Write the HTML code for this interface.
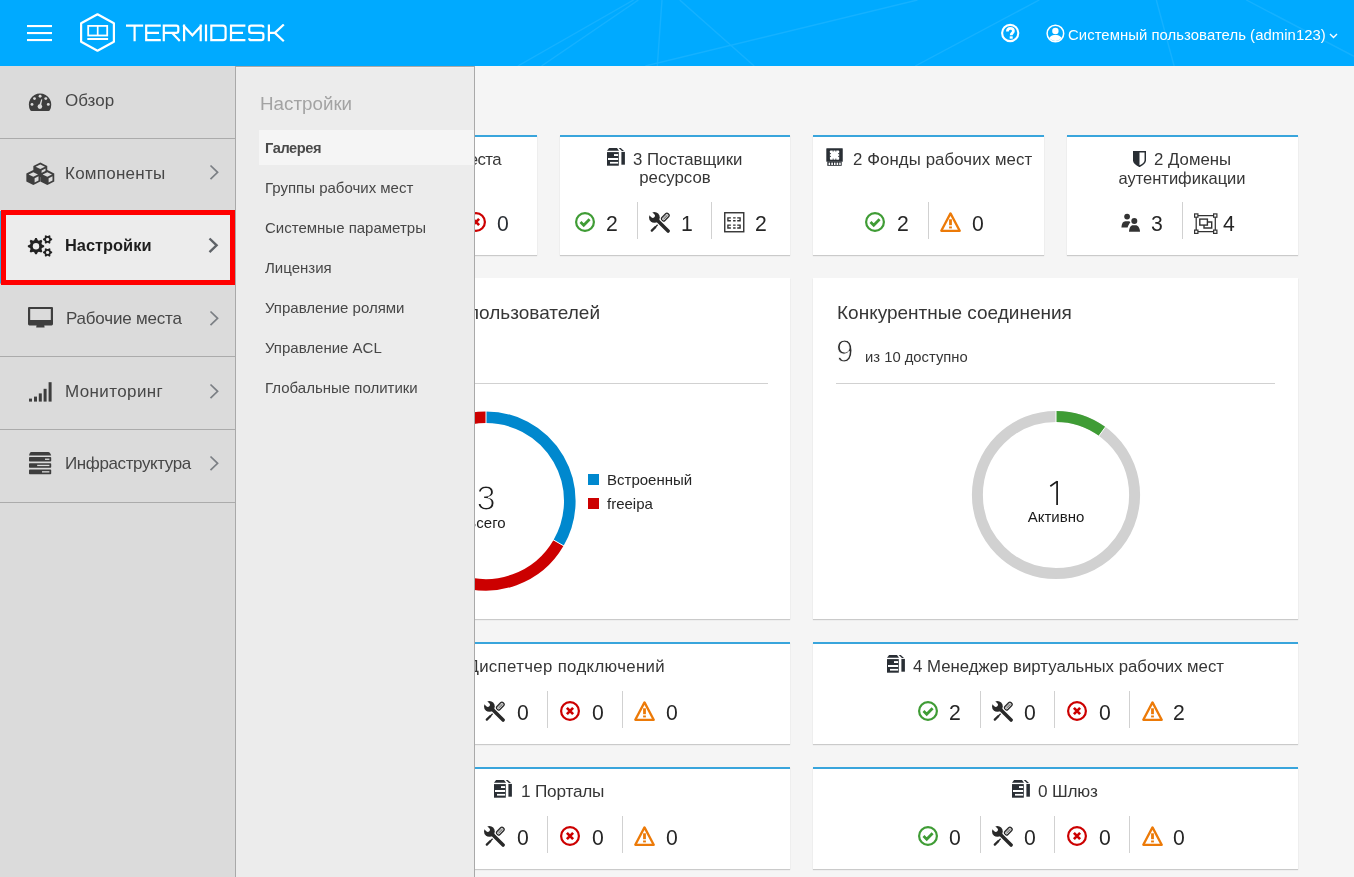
<!DOCTYPE html><html><head><meta charset="utf-8"><style>
html,body{margin:0;padding:0}
body{width:1354px;height:877px;overflow:hidden;position:relative;background:#f5f5f5;font-family:"Liberation Sans",sans-serif}
.t{position:absolute;white-space:nowrap;will-change:transform}
.card{position:absolute;background:#fff;box-shadow:0 1px 1px rgba(3,3,3,0.175)}
.acc{border-top:2px solid #39a5dc}
</style></head><body>
<div class="card acc" style="left:307px;top:135px;width:230px;height:118px"></div>
<div class="card acc" style="left:560px;top:135px;width:230px;height:118px"></div>
<div class="card acc" style="left:813px;top:135px;width:231px;height:118px"></div>
<div class="card acc" style="left:1067px;top:135px;width:231px;height:118px"></div>
<div class="card" style="left:307px;top:278px;width:483px;height:341px"></div>
<div class="card" style="left:813px;top:278px;width:485px;height:341px"></div>
<div class="card acc" style="left:307px;top:642px;width:483px;height:100px"></div>
<div class="card acc" style="left:813px;top:642px;width:485px;height:100px"></div>
<div class="card acc" style="left:307px;top:767px;width:483px;height:100px"></div>
<div class="card acc" style="left:813px;top:767px;width:485px;height:100px"></div>
<div class="t" style="left:-98.89999999999998px;width:600px;text-align:right;top:151.78px;font-size:16.8px;line-height:16.8px;color:#363636;font-weight:400;letter-spacing:-0.6px">еста</div>
<svg style="position:absolute;left:466px;top:212px" width="20" height="20" viewBox="0 0 20 20"><circle cx="10" cy="10" r="8.9" fill="none" stroke="#cc0000" stroke-width="2.2"/><path d="M6.9 6.9 L13.1 13.1 M13.1 6.9 L6.9 13.1" fill="none" stroke="#cc0000" stroke-width="2.7"/></svg>
<div class="t" style="left:497px;top:213.25px;font-size:21.2px;line-height:21.2px;color:#292e34;font-weight:400;">0</div>
<svg style="position:absolute;left:606px;top:148px" width="19" height="18" viewBox="0 0 19 18"><path d="M3.1 0 H11 L13 2.7 H1 Z" fill="#292e34"/><path d="M12.7 0 L14.7 0 L18 2.9 L15.9 2.9 Z" fill="#292e34"/><rect x="1" y="4.1" width="11.8" height="13.6" fill="#292e34"/><rect x="15.4" y="3.9" width="3.5" height="12.8" fill="#292e34"/><rect x="8" y="6.1" width="4.1" height="1.9" fill="#fff"/><rect x="2" y="10" width="10.1" height="2" fill="#fff"/><rect x="4" y="13.9" width="8.1" height="1.7" fill="#fff"/></svg>
<div class="t" style="left:632.6px;top:151.78px;font-size:16.8px;line-height:16.8px;color:#363636;font-weight:400;">3 Поставщики</div>
<div class="t" style="left:475.4px;width:400px;text-align:center;top:169.98px;font-size:16.8px;line-height:16.8px;color:#363636;font-weight:400;">ресурсов</div>
<svg style="position:absolute;left:574.5px;top:212px" width="20" height="20" viewBox="0 0 20 20"><circle cx="10" cy="10" r="8.9" fill="none" stroke="#3f9c35" stroke-width="2.2"/><path d="M5.5 10.1 L8.7 13.2 L14.6 7.3" fill="none" stroke="#3f9c35" stroke-width="2.8"/></svg>
<div class="t" style="left:606px;top:213.25px;font-size:21.2px;line-height:21.2px;color:#262626;font-weight:400;">2</div>
<div style="position:absolute;left:637px;top:202px;width:1px;height:37px;background:#d1d1d1"></div>
<svg style="position:absolute;left:648.6px;top:212px" width="21" height="21" viewBox="0 0 21 21"><g transform="rotate(-45 16.2 5.2)"><rect x="11.9" y="3.1" width="8.8" height="4.2" rx="1.8" fill="#fff" stroke="#292929" stroke-width="1.3"/><path d="M13.4 4.6 H19.4 M13.4 5.8 H19.4" stroke="#292929" stroke-width="0.7"/></g><path d="M12.6 8.8 L5.4 16" stroke="#292929" stroke-width="1.3"/><path d="M6.2 15.2 L2.8 18.6" stroke="#292929" stroke-width="2.3" stroke-linecap="round"/><path d="M7 7 L19.1 19.1" stroke="#fff" stroke-width="5.8" stroke-linecap="round"/><path d="M7 7 L19.1 19.1" stroke="#292929" stroke-width="3.5" stroke-linecap="round"/><circle cx="5.4" cy="5.4" r="5.35" fill="#292929"/><path d="M3.8 3.8 L-1 -1" stroke="#fff" stroke-width="4.2" stroke-linecap="round"/></svg>
<div class="t" style="left:681px;top:213.25px;font-size:21.2px;line-height:21.2px;color:#262626;font-weight:400;">1</div>
<div style="position:absolute;left:711px;top:202px;width:1px;height:37px;background:#d1d1d1"></div>
<svg style="position:absolute;left:724px;top:212px" width="21" height="21" viewBox="0 0 21 21"><rect x="0.75" y="0.75" width="19" height="19" fill="none" stroke="#333" stroke-width="1.4"/><path d="M6.9 5.9 H3.9 V8.75 H6.9 M13.2 5.9 H16.1 V8.75 H13.2 M9.1 5.9 H11.6 M9.1 8.75 H11.6 M6.9 13.1 H3.9 V15.95 H6.9 M13.2 13.1 H16.1 V15.95 H13.2 M9.1 13.1 H11.6 M9.1 15.95 H11.6" fill="none" stroke="#333" stroke-width="1.35"/></svg>
<div class="t" style="left:755px;top:213.25px;font-size:21.2px;line-height:21.2px;color:#262626;font-weight:400;">2</div>
<svg style="position:absolute;left:826px;top:148px" width="17" height="18" viewBox="0 0 17 18"><rect x="0.3" y="0.15" width="16.45" height="13.65" rx="0.5" fill="#292e34"/><rect x="1.3" y="13.6" width="14.4" height="4.2" fill="#292e34"/><g fill="#fff"><rect x="2.6" y="14.6" width="1.5" height="2.4"/><rect x="5.3" y="14.6" width="1.6" height="2.4"/><rect x="8" y="14.6" width="1.5" height="2.4"/><rect x="10.6" y="14.6" width="1.6" height="2.4"/><rect x="13.2" y="14.6" width="1.5" height="2.4"/></g><rect x="3.9" y="2.4" width="9.3" height="9.3" rx="0.8" fill="#fff"/><g fill="#292e34"><rect x="6.7" y="2.2" width="0.9" height="1.3"/><rect x="9.4" y="2.2" width="0.9" height="1.3"/><rect x="6.7" y="10.6" width="0.9" height="1.3"/><rect x="9.4" y="10.6" width="0.9" height="1.3"/><rect x="3.7" y="5.2" width="1.3" height="0.9"/><rect x="3.7" y="7.9" width="1.3" height="0.9"/><rect x="12.1" y="5.2" width="1.3" height="0.9"/><rect x="12.1" y="7.9" width="1.3" height="0.9"/></g></svg>
<div class="t" style="left:853.4px;top:151.98px;font-size:16.8px;line-height:16.8px;color:#363636;font-weight:400;letter-spacing:0.1px">2 Фонды рабочих мест</div>
<svg style="position:absolute;left:865px;top:212px" width="20" height="20" viewBox="0 0 20 20"><circle cx="10" cy="10" r="8.9" fill="none" stroke="#3f9c35" stroke-width="2.2"/><path d="M5.5 10.1 L8.7 13.2 L14.6 7.3" fill="none" stroke="#3f9c35" stroke-width="2.8"/></svg>
<div class="t" style="left:896.6px;top:213.25px;font-size:21.2px;line-height:21.2px;color:#262626;font-weight:400;">2</div>
<div style="position:absolute;left:928px;top:202px;width:1px;height:37px;background:#d1d1d1"></div>
<svg style="position:absolute;left:940px;top:212px" width="21" height="20" viewBox="0 0 21 20"><path d="M10.5 1.4 L19.7 18.8 L1.3 18.8 Z" fill="none" stroke="#ec7a08" stroke-width="2.3" stroke-linejoin="round"/><rect x="9.1" y="7.3" width="2.8" height="5.9" fill="#ec7a08"/><rect x="9.1" y="14.5" width="2.8" height="1.9" fill="#ec7a08"/></svg>
<div class="t" style="left:972px;top:213.25px;font-size:21.2px;line-height:21.2px;color:#262626;font-weight:400;">0</div>
<svg style="position:absolute;left:1133px;top:151px" width="13" height="16" viewBox="0 0 13 16"><path d="M0.7 0.7 H12.3 V9 C12.3 11.6 9.6 13.8 6.5 15.2 C3.4 13.8 0.7 11.6 0.7 9 Z" fill="none" stroke="#292e34" stroke-width="1.5"/><path d="M0.7 0.7 H6.5 V15.2 C3.4 13.8 0.7 11.6 0.7 9 Z" fill="#292e34"/></svg>
<div class="t" style="left:1153.8px;top:151.98px;font-size:16.8px;line-height:16.8px;color:#363636;font-weight:400;">2 Домены</div>
<div class="t" style="left:982.0px;width:400px;text-align:center;top:169.63px;font-size:16.5px;line-height:16.5px;color:#363636;font-weight:400;">аутентификации</div>
<svg style="position:absolute;left:1121px;top:213px" width="20" height="20" viewBox="0 0 20 20"><circle cx="6.1" cy="3.6" r="2.9" fill="#333"/><path d="M0.4 14.6 C0.6 10.4 2 8.2 4.4 8.2 L8.4 8.2 L9.4 9.6 C8.4 10.6 7.4 12 6.6 14.6 Z" fill="#333"/><circle cx="13.3" cy="7.9" r="3" fill="#333"/><path d="M8 18.8 C8.2 14.6 9.6 12.2 12 12.2 L14.6 12.2 C17 12.2 18.8 14.6 19 18.8 Z" fill="#333"/></svg>
<div class="t" style="left:1151px;top:213.25px;font-size:21.2px;line-height:21.2px;color:#262626;font-weight:400;">3</div>
<div style="position:absolute;left:1182px;top:202px;width:1px;height:37px;background:#d1d1d1"></div>
<svg style="position:absolute;left:1194px;top:213px" width="24" height="22" viewBox="0 0 24 22"><path d="M2.2 2.5 V18.7 M21.3 2.5 V18.7 M2.2 2.5 H21.3 M2.2 18.7 H21.3" fill="none" stroke="#333" stroke-width="1.25"/><g fill="#fff" stroke="#333" stroke-width="1.2"><rect x="0.6" y="0.9" width="3.3" height="3.3"/><rect x="19.6" y="0.9" width="3.3" height="3.3"/><rect x="0.6" y="17.1" width="3.3" height="3.3"/><rect x="19.6" y="17.1" width="3.3" height="3.3"/></g><path d="M13.4 9 H17.7 V15 H10 V12.1" fill="none" stroke="#333" stroke-width="1.4"/><rect x="5.8" y="6.1" width="7.6" height="6" fill="none" stroke="#333" stroke-width="1.4"/></svg>
<div class="t" style="left:1222.6px;top:213.25px;font-size:21.2px;line-height:21.2px;color:#262626;font-weight:400;">4</div>
<div class="t" style="left:-0.5px;width:600px;text-align:right;top:302.72px;font-size:19px;line-height:19px;color:#363636;font-weight:400;">Источники пользователей</div>
<div style="position:absolute;left:330px;top:383px;width:438px;height:1px;background:#d1d1d1"></div>
<svg style="position:absolute;left:386px;top:401px" width="200" height="200" viewBox="0 0 200 200"><path d="M100.00 16.20 A83.8 83.8 0 0 1 172.57 141.90" fill="none" stroke="#0088ce" stroke-width="11.6"/><path d="M172.57 141.90 A83.8 83.8 0 1 1 100.00 16.20" fill="none" stroke="#cc0000" stroke-width="11.6"/><path d="M100 10 V22 M165.64 137.90 L179.50 145.90" stroke="#fff" stroke-width="1"/></svg>
<div class="t" style="left:286.0px;width:400px;text-align:center;top:481.00px;font-size:34.5px;line-height:34.5px;color:#1e1e1e;font-weight:400;-webkit-text-stroke:1.2px #fff">3</div>
<div class="t" style="left:286.0px;width:400px;text-align:center;top:515.00px;font-size:15px;line-height:15px;color:#1a1a1a;font-weight:400;">Всего</div>
<div style="position:absolute;left:588px;top:474px;width:11px;height:11px;background:#0088ce"></div>
<div class="t" style="left:606.7px;top:472.30px;font-size:15px;line-height:15px;color:#262626;font-weight:400;">Встроенный</div>
<div style="position:absolute;left:588px;top:498px;width:11px;height:11px;background:#cc0000"></div>
<div class="t" style="left:606.7px;top:496.30px;font-size:15px;line-height:15px;color:#262626;font-weight:400;">freeipa</div>
<div class="t" style="left:836.5px;top:303.12px;font-size:19px;line-height:19px;color:#363636;font-weight:400;">Конкурентные соединения</div>
<div class="t" style="left:835.8px;top:335.74px;font-size:31.5px;line-height:31.5px;color:#303030;font-weight:400;-webkit-text-stroke:1px #fff">9</div>
<div class="t" style="left:865px;top:350.47px;font-size:14.8px;line-height:14.8px;color:#363636;font-weight:400;">из 10 доступно</div>
<div style="position:absolute;left:836px;top:383px;width:439px;height:1px;background:#d1d1d1"></div>
<svg style="position:absolute;left:956px;top:395px" width="200" height="200" viewBox="0 0 200 200"><circle cx="100" cy="100" r="78.6" fill="none" stroke="#d1d1d1" stroke-width="11"/><path d="M100.00 21.40 A78.6 78.6 0 0 1 146.20 36.41" fill="none" stroke="#3f9c35" stroke-width="11"/><path d="M100 15 V27 M142.32 41.75 L150.55 30.42" stroke="#fff" stroke-width="1"/></svg>
<svg style="position:absolute;left:1046px;top:478px" width="16" height="30" viewBox="0 0 16 30"><path d="M4.3 8.3 L11.1 3.4 M11.1 2.9 V27" fill="none" stroke="#1e1e1e" stroke-width="1.75" stroke-linejoin="round"/></svg>
<div class="t" style="left:856.0px;width:400px;text-align:center;top:509.00px;font-size:15px;line-height:15px;color:#1a1a1a;font-weight:400;">Активно</div>
<div class="t" style="left:65.29999999999995px;width:600px;text-align:right;top:658.78px;font-size:16.8px;line-height:16.8px;color:#363636;font-weight:400;letter-spacing:0.35px">Диспетчер подключений</div>
<svg style="position:absolute;left:409.4px;top:701px" width="20" height="20" viewBox="0 0 20 20"><circle cx="10" cy="10" r="8.9" fill="none" stroke="#3f9c35" stroke-width="2.2"/><path d="M5.5 10.1 L8.7 13.2 L14.6 7.3" fill="none" stroke="#3f9c35" stroke-width="2.8"/></svg>
<div class="t" style="left:441.6px;top:702.25px;font-size:21.2px;line-height:21.2px;color:#262626;font-weight:400;">0</div>
<div style="position:absolute;left:472px;top:691px;width:1px;height:37px;background:#d1d1d1"></div>
<svg style="position:absolute;left:484.4px;top:701px" width="21" height="21" viewBox="0 0 21 21"><g transform="rotate(-45 16.2 5.2)"><rect x="11.9" y="3.1" width="8.8" height="4.2" rx="1.8" fill="#fff" stroke="#292929" stroke-width="1.3"/><path d="M13.4 4.6 H19.4 M13.4 5.8 H19.4" stroke="#292929" stroke-width="0.7"/></g><path d="M12.6 8.8 L5.4 16" stroke="#292929" stroke-width="1.3"/><path d="M6.2 15.2 L2.8 18.6" stroke="#292929" stroke-width="2.3" stroke-linecap="round"/><path d="M7 7 L19.1 19.1" stroke="#fff" stroke-width="5.8" stroke-linecap="round"/><path d="M7 7 L19.1 19.1" stroke="#292929" stroke-width="3.5" stroke-linecap="round"/><circle cx="5.4" cy="5.4" r="5.35" fill="#292929"/><path d="M3.8 3.8 L-1 -1" stroke="#fff" stroke-width="4.2" stroke-linecap="round"/></svg>
<div class="t" style="left:516.6px;top:702.25px;font-size:21.2px;line-height:21.2px;color:#262626;font-weight:400;">0</div>
<div style="position:absolute;left:547px;top:691px;width:1px;height:37px;background:#d1d1d1"></div>
<svg style="position:absolute;left:559.5px;top:701px" width="20" height="20" viewBox="0 0 20 20"><circle cx="10" cy="10" r="8.9" fill="none" stroke="#cc0000" stroke-width="2.2"/><path d="M6.9 6.9 L13.1 13.1 M13.1 6.9 L6.9 13.1" fill="none" stroke="#cc0000" stroke-width="2.7"/></svg>
<div class="t" style="left:591.5px;top:702.25px;font-size:21.2px;line-height:21.2px;color:#262626;font-weight:400;">0</div>
<div style="position:absolute;left:622px;top:691px;width:1px;height:37px;background:#d1d1d1"></div>
<svg style="position:absolute;left:634.4px;top:701px" width="21" height="20" viewBox="0 0 21 20"><path d="M10.5 1.4 L19.7 18.8 L1.3 18.8 Z" fill="none" stroke="#ec7a08" stroke-width="2.3" stroke-linejoin="round"/><rect x="9.1" y="7.3" width="2.8" height="5.9" fill="#ec7a08"/><rect x="9.1" y="14.5" width="2.8" height="1.9" fill="#ec7a08"/></svg>
<div class="t" style="left:666.2px;top:702.25px;font-size:21.2px;line-height:21.2px;color:#262626;font-weight:400;">0</div>
<svg style="position:absolute;left:886px;top:655px" width="19" height="18" viewBox="0 0 19 18"><path d="M3.1 0 H11 L13 2.7 H1 Z" fill="#292e34"/><path d="M12.7 0 L14.7 0 L18 2.9 L15.9 2.9 Z" fill="#292e34"/><rect x="1" y="4.1" width="11.8" height="13.6" fill="#292e34"/><rect x="15.4" y="3.9" width="3.5" height="12.8" fill="#292e34"/><rect x="8" y="6.1" width="4.1" height="1.9" fill="#fff"/><rect x="2" y="10" width="10.1" height="2" fill="#fff"/><rect x="4" y="13.9" width="8.1" height="1.7" fill="#fff"/></svg>
<div class="t" style="left:913px;top:658.78px;font-size:16.8px;line-height:16.8px;color:#363636;font-weight:400;">4 Менеджер виртуальных рабочих мест</div>
<svg style="position:absolute;left:917.5px;top:701px" width="20" height="20" viewBox="0 0 20 20"><circle cx="10" cy="10" r="8.9" fill="none" stroke="#3f9c35" stroke-width="2.2"/><path d="M5.5 10.1 L8.7 13.2 L14.6 7.3" fill="none" stroke="#3f9c35" stroke-width="2.8"/></svg>
<div class="t" style="left:949.3px;top:702.25px;font-size:21.2px;line-height:21.2px;color:#262626;font-weight:400;">2</div>
<div style="position:absolute;left:980px;top:691px;width:1px;height:37px;background:#d1d1d1"></div>
<svg style="position:absolute;left:991.7px;top:701px" width="21" height="21" viewBox="0 0 21 21"><g transform="rotate(-45 16.2 5.2)"><rect x="11.9" y="3.1" width="8.8" height="4.2" rx="1.8" fill="#fff" stroke="#292929" stroke-width="1.3"/><path d="M13.4 4.6 H19.4 M13.4 5.8 H19.4" stroke="#292929" stroke-width="0.7"/></g><path d="M12.6 8.8 L5.4 16" stroke="#292929" stroke-width="1.3"/><path d="M6.2 15.2 L2.8 18.6" stroke="#292929" stroke-width="2.3" stroke-linecap="round"/><path d="M7 7 L19.1 19.1" stroke="#fff" stroke-width="5.8" stroke-linecap="round"/><path d="M7 7 L19.1 19.1" stroke="#292929" stroke-width="3.5" stroke-linecap="round"/><circle cx="5.4" cy="5.4" r="5.35" fill="#292929"/><path d="M3.8 3.8 L-1 -1" stroke="#fff" stroke-width="4.2" stroke-linecap="round"/></svg>
<div class="t" style="left:1024px;top:702.25px;font-size:21.2px;line-height:21.2px;color:#262626;font-weight:400;">0</div>
<div style="position:absolute;left:1054px;top:691px;width:1px;height:37px;background:#d1d1d1"></div>
<svg style="position:absolute;left:1066.6px;top:701px" width="20" height="20" viewBox="0 0 20 20"><circle cx="10" cy="10" r="8.9" fill="none" stroke="#cc0000" stroke-width="2.2"/><path d="M6.9 6.9 L13.1 13.1 M13.1 6.9 L6.9 13.1" fill="none" stroke="#cc0000" stroke-width="2.7"/></svg>
<div class="t" style="left:1099px;top:702.25px;font-size:21.2px;line-height:21.2px;color:#262626;font-weight:400;">0</div>
<div style="position:absolute;left:1129px;top:691px;width:1px;height:37px;background:#d1d1d1"></div>
<svg style="position:absolute;left:1141.6px;top:701px" width="21" height="20" viewBox="0 0 21 20"><path d="M10.5 1.4 L19.7 18.8 L1.3 18.8 Z" fill="none" stroke="#ec7a08" stroke-width="2.3" stroke-linejoin="round"/><rect x="9.1" y="7.3" width="2.8" height="5.9" fill="#ec7a08"/><rect x="9.1" y="14.5" width="2.8" height="1.9" fill="#ec7a08"/></svg>
<div class="t" style="left:1173.4px;top:702.25px;font-size:21.2px;line-height:21.2px;color:#262626;font-weight:400;">2</div>
<svg style="position:absolute;left:493px;top:780px" width="19" height="18" viewBox="0 0 19 18"><path d="M3.1 0 H11 L13 2.7 H1 Z" fill="#292e34"/><path d="M12.7 0 L14.7 0 L18 2.9 L15.9 2.9 Z" fill="#292e34"/><rect x="1" y="4.1" width="11.8" height="13.6" fill="#292e34"/><rect x="15.4" y="3.9" width="3.5" height="12.8" fill="#292e34"/><rect x="8" y="6.1" width="4.1" height="1.9" fill="#fff"/><rect x="2" y="10" width="10.1" height="2" fill="#fff"/><rect x="4" y="13.9" width="8.1" height="1.7" fill="#fff"/></svg>
<div class="t" style="left:520.5px;top:783.44px;font-size:17.2px;line-height:17.2px;color:#363636;font-weight:400;letter-spacing:-0.2px">1 Порталы</div>
<svg style="position:absolute;left:409.4px;top:826px" width="20" height="20" viewBox="0 0 20 20"><circle cx="10" cy="10" r="8.9" fill="none" stroke="#3f9c35" stroke-width="2.2"/><path d="M5.5 10.1 L8.7 13.2 L14.6 7.3" fill="none" stroke="#3f9c35" stroke-width="2.8"/></svg>
<div class="t" style="left:441.6px;top:827.25px;font-size:21.2px;line-height:21.2px;color:#262626;font-weight:400;">0</div>
<div style="position:absolute;left:472px;top:816px;width:1px;height:37px;background:#d1d1d1"></div>
<svg style="position:absolute;left:484.4px;top:826px" width="21" height="21" viewBox="0 0 21 21"><g transform="rotate(-45 16.2 5.2)"><rect x="11.9" y="3.1" width="8.8" height="4.2" rx="1.8" fill="#fff" stroke="#292929" stroke-width="1.3"/><path d="M13.4 4.6 H19.4 M13.4 5.8 H19.4" stroke="#292929" stroke-width="0.7"/></g><path d="M12.6 8.8 L5.4 16" stroke="#292929" stroke-width="1.3"/><path d="M6.2 15.2 L2.8 18.6" stroke="#292929" stroke-width="2.3" stroke-linecap="round"/><path d="M7 7 L19.1 19.1" stroke="#fff" stroke-width="5.8" stroke-linecap="round"/><path d="M7 7 L19.1 19.1" stroke="#292929" stroke-width="3.5" stroke-linecap="round"/><circle cx="5.4" cy="5.4" r="5.35" fill="#292929"/><path d="M3.8 3.8 L-1 -1" stroke="#fff" stroke-width="4.2" stroke-linecap="round"/></svg>
<div class="t" style="left:516.6px;top:827.25px;font-size:21.2px;line-height:21.2px;color:#262626;font-weight:400;">0</div>
<div style="position:absolute;left:547px;top:816px;width:1px;height:37px;background:#d1d1d1"></div>
<svg style="position:absolute;left:559.5px;top:826px" width="20" height="20" viewBox="0 0 20 20"><circle cx="10" cy="10" r="8.9" fill="none" stroke="#cc0000" stroke-width="2.2"/><path d="M6.9 6.9 L13.1 13.1 M13.1 6.9 L6.9 13.1" fill="none" stroke="#cc0000" stroke-width="2.7"/></svg>
<div class="t" style="left:591.5px;top:827.25px;font-size:21.2px;line-height:21.2px;color:#262626;font-weight:400;">0</div>
<div style="position:absolute;left:622px;top:816px;width:1px;height:37px;background:#d1d1d1"></div>
<svg style="position:absolute;left:634.4px;top:826px" width="21" height="20" viewBox="0 0 21 20"><path d="M10.5 1.4 L19.7 18.8 L1.3 18.8 Z" fill="none" stroke="#ec7a08" stroke-width="2.3" stroke-linejoin="round"/><rect x="9.1" y="7.3" width="2.8" height="5.9" fill="#ec7a08"/><rect x="9.1" y="14.5" width="2.8" height="1.9" fill="#ec7a08"/></svg>
<div class="t" style="left:666.2px;top:827.25px;font-size:21.2px;line-height:21.2px;color:#262626;font-weight:400;">0</div>
<svg style="position:absolute;left:1011px;top:780px" width="19" height="18" viewBox="0 0 19 18"><path d="M3.1 0 H11 L13 2.7 H1 Z" fill="#292e34"/><path d="M12.7 0 L14.7 0 L18 2.9 L15.9 2.9 Z" fill="#292e34"/><rect x="1" y="4.1" width="11.8" height="13.6" fill="#292e34"/><rect x="15.4" y="3.9" width="3.5" height="12.8" fill="#292e34"/><rect x="8" y="6.1" width="4.1" height="1.9" fill="#fff"/><rect x="2" y="10" width="10.1" height="2" fill="#fff"/><rect x="4" y="13.9" width="8.1" height="1.7" fill="#fff"/></svg>
<div class="t" style="left:1038.2px;top:783.44px;font-size:17.2px;line-height:17.2px;color:#363636;font-weight:400;letter-spacing:-0.2px">0 Шлюз</div>
<svg style="position:absolute;left:917.5px;top:826px" width="20" height="20" viewBox="0 0 20 20"><circle cx="10" cy="10" r="8.9" fill="none" stroke="#3f9c35" stroke-width="2.2"/><path d="M5.5 10.1 L8.7 13.2 L14.6 7.3" fill="none" stroke="#3f9c35" stroke-width="2.8"/></svg>
<div class="t" style="left:949.3px;top:827.25px;font-size:21.2px;line-height:21.2px;color:#262626;font-weight:400;">0</div>
<div style="position:absolute;left:980px;top:816px;width:1px;height:37px;background:#d1d1d1"></div>
<svg style="position:absolute;left:991.7px;top:826px" width="21" height="21" viewBox="0 0 21 21"><g transform="rotate(-45 16.2 5.2)"><rect x="11.9" y="3.1" width="8.8" height="4.2" rx="1.8" fill="#fff" stroke="#292929" stroke-width="1.3"/><path d="M13.4 4.6 H19.4 M13.4 5.8 H19.4" stroke="#292929" stroke-width="0.7"/></g><path d="M12.6 8.8 L5.4 16" stroke="#292929" stroke-width="1.3"/><path d="M6.2 15.2 L2.8 18.6" stroke="#292929" stroke-width="2.3" stroke-linecap="round"/><path d="M7 7 L19.1 19.1" stroke="#fff" stroke-width="5.8" stroke-linecap="round"/><path d="M7 7 L19.1 19.1" stroke="#292929" stroke-width="3.5" stroke-linecap="round"/><circle cx="5.4" cy="5.4" r="5.35" fill="#292929"/><path d="M3.8 3.8 L-1 -1" stroke="#fff" stroke-width="4.2" stroke-linecap="round"/></svg>
<div class="t" style="left:1024px;top:827.25px;font-size:21.2px;line-height:21.2px;color:#262626;font-weight:400;">0</div>
<div style="position:absolute;left:1054px;top:816px;width:1px;height:37px;background:#d1d1d1"></div>
<svg style="position:absolute;left:1066.6px;top:826px" width="20" height="20" viewBox="0 0 20 20"><circle cx="10" cy="10" r="8.9" fill="none" stroke="#cc0000" stroke-width="2.2"/><path d="M6.9 6.9 L13.1 13.1 M13.1 6.9 L6.9 13.1" fill="none" stroke="#cc0000" stroke-width="2.7"/></svg>
<div class="t" style="left:1099px;top:827.25px;font-size:21.2px;line-height:21.2px;color:#262626;font-weight:400;">0</div>
<div style="position:absolute;left:1129px;top:816px;width:1px;height:37px;background:#d1d1d1"></div>
<svg style="position:absolute;left:1141.6px;top:826px" width="21" height="20" viewBox="0 0 21 20"><path d="M10.5 1.4 L19.7 18.8 L1.3 18.8 Z" fill="none" stroke="#ec7a08" stroke-width="2.3" stroke-linejoin="round"/><rect x="9.1" y="7.3" width="2.8" height="5.9" fill="#ec7a08"/><rect x="9.1" y="14.5" width="2.8" height="1.9" fill="#ec7a08"/></svg>
<div class="t" style="left:1173.4px;top:827.25px;font-size:21.2px;line-height:21.2px;color:#262626;font-weight:400;">0</div>
<div style="position:absolute;left:236px;top:66px;width:238px;height:811px;background:#ececec"></div>
<div style="position:absolute;left:474px;top:66px;width:1px;height:811px;background:#a9a9a9"></div>
<div style="position:absolute;left:235px;top:66px;width:240px;height:1px;background:#a9a9a9"></div>
<div style="position:absolute;left:236px;top:67px;width:238px;height:1px;background:#f1f1f1"></div>
<div class="t" style="left:260px;top:94.59px;font-size:18.8px;line-height:18.8px;color:#a3a3a3;font-weight:400;">Настройки</div>
<div style="position:absolute;left:259px;top:130px;width:215px;height:35px;background:#f5f5f5"></div>
<div class="t" style="left:265.2px;top:140.64px;font-size:14.6px;line-height:14.6px;color:#4a4a4a;font-weight:700;letter-spacing:-0.4px">Галерея</div>
<div class="t" style="left:265.0px;top:180.30px;font-size:15px;line-height:15px;color:#474747;font-weight:400;">Группы рабочих мест</div>
<div class="t" style="left:265.0px;top:220.30px;font-size:15px;line-height:15px;color:#474747;font-weight:400;">Системные параметры</div>
<div class="t" style="left:265.0px;top:260.30px;font-size:15px;line-height:15px;color:#474747;font-weight:400;">Лицензия</div>
<div class="t" style="left:265.0px;top:300.30px;font-size:15px;line-height:15px;color:#474747;font-weight:400;">Управление ролями</div>
<div class="t" style="left:265.0px;top:340.30px;font-size:15px;line-height:15px;color:#474747;font-weight:400;">Управление ACL</div>
<div class="t" style="left:265.0px;top:380.30px;font-size:15px;line-height:15px;color:#474747;font-weight:400;">Глобальные политики</div>
<div style="position:absolute;left:0px;top:66px;width:235px;height:811px;background:#dbdbdb"></div>
<div style="position:absolute;left:235px;top:67px;width:1px;height:810px;background:#a9a9a9"></div>
<div style="position:absolute;left:0px;top:138px;width:235px;height:1px;background:#ababab"></div>
<div style="position:absolute;left:0px;top:211px;width:235px;height:1px;background:#ababab"></div>
<div style="position:absolute;left:0px;top:283px;width:235px;height:1px;background:#ababab"></div>
<div style="position:absolute;left:0px;top:356px;width:235px;height:1px;background:#ababab"></div>
<div style="position:absolute;left:0px;top:429px;width:235px;height:1px;background:#ababab"></div>
<div style="position:absolute;left:0px;top:502px;width:235px;height:1px;background:#ababab"></div>
<div style="position:absolute;left:0px;top:211px;width:235px;height:72px;background:#ececec"></div>
<div style="position:absolute;left:0px;top:211px;width:2px;height:72px;background:#39a5dc"></div>
<div class="t" style="left:65.2px;top:91.61px;font-size:17px;line-height:17px;color:#474747;font-weight:400;">Обзор</div>
<div class="t" style="left:65.2px;top:164.61px;font-size:17px;line-height:17px;color:#474747;font-weight:400;letter-spacing:0.25px">Компоненты</div>
<div class="t" style="left:65.4px;top:237.12px;font-size:16.4px;line-height:16.4px;color:#1e1e1e;font-weight:700;">Настройки</div>
<div class="t" style="left:65.7px;top:309.81px;font-size:17px;line-height:17px;color:#474747;font-weight:400;letter-spacing:-0.2px">Рабочие места</div>
<div class="t" style="left:65.2px;top:382.61px;font-size:17px;line-height:17px;color:#474747;font-weight:400;letter-spacing:0.39px">Мониторинг</div>
<div class="t" style="left:65.2px;top:454.91px;font-size:17px;line-height:17px;color:#474747;font-weight:400;letter-spacing:-0.39px">Инфраструктура</div>
<svg style="position:absolute;left:206px;top:163px" width="16" height="18" viewBox="0 0 16 18"><path d="M4.5 2.5 L11.6 9.3 L4.5 16.1" fill="none" stroke="#7b7f84" stroke-width="1.7"/></svg>
<svg style="position:absolute;left:205px;top:236px" width="16" height="18" viewBox="0 0 16 18"><path d="M4.5 2.5 L11.6 9.3 L4.5 16.1" fill="none" stroke="#5f6368" stroke-width="2.4"/></svg>
<svg style="position:absolute;left:206px;top:309px" width="16" height="18" viewBox="0 0 16 18"><path d="M4.5 2.5 L11.6 9.3 L4.5 16.1" fill="none" stroke="#7b7f84" stroke-width="1.7"/></svg>
<svg style="position:absolute;left:206px;top:382px" width="16" height="18" viewBox="0 0 16 18"><path d="M4.5 2.5 L11.6 9.3 L4.5 16.1" fill="none" stroke="#7b7f84" stroke-width="1.7"/></svg>
<svg style="position:absolute;left:206px;top:454px" width="16" height="18" viewBox="0 0 16 18"><path d="M4.5 2.5 L11.6 9.3 L4.5 16.1" fill="none" stroke="#7b7f84" stroke-width="1.7"/></svg>
<svg style="position:absolute;left:28px;top:92px" width="25" height="20" viewBox="0 0 25 20"><path d="M3.6 18.9 L20.5 18.9 Q21.4 18.9 21.8 18.2 A11.2 11.2 0 1 0 2.3 18.2 Q2.7 18.9 3.6 18.9 Z" fill="#3e3e3e"/><g fill="#dbdbdb"><circle cx="12.1" cy="4.3" r="1.45"/><circle cx="6.5" cy="6.6" r="1.45"/><circle cx="17.8" cy="6.6" r="1.45"/><circle cx="4" cy="12.4" r="1.45"/><circle cx="20.3" cy="12.4" r="1.45"/><circle cx="11.9" cy="14.6" r="2.3"/><path d="M11 14 L13.3 7.3 L14.3 7.6 L12.8 14.4 Z"/></g></svg>
<svg style="position:absolute;left:25px;top:161px" width="32" height="26" viewBox="0 0 32 26"><path d="M15.3 1.4000000000000004 L22.25 4.9 L22.25 12.7 L15.3 16.2 L8.350000000000001 12.7 L8.350000000000001 4.9 Z" fill="#3e3e3e"/><path d="M15.3 3.5 L20.0 5.7 L15.3 8.0 L10.600000000000001 5.7 Z" fill="#dbdbdb"/><path d="M16.6 9.6 L20.5 7.6 L20.5 11.9 L16.6 13.9 Z" fill="#dbdbdb"/><path d="M8.3 9.1 L15.25 12.6 L15.25 20.4 L8.3 23.9 L1.3500000000000005 20.4 L1.3500000000000005 12.6 Z" fill="#3e3e3e"/><path d="M8.3 11.2 L13.0 13.399999999999999 L8.3 15.7 L3.6000000000000005 13.399999999999999 Z" fill="#dbdbdb"/><path d="M9.600000000000001 17.3 L13.5 15.299999999999999 L13.5 19.599999999999998 L9.600000000000001 21.6 Z" fill="#dbdbdb"/><path d="M22.3 9.1 L29.25 12.6 L29.25 20.4 L22.3 23.9 L15.350000000000001 20.4 L15.350000000000001 12.6 Z" fill="#3e3e3e"/><path d="M22.3 11.2 L27.0 13.399999999999999 L22.3 15.7 L17.6 13.399999999999999 Z" fill="#dbdbdb"/><path d="M23.6 17.3 L27.5 15.299999999999999 L27.5 19.599999999999998 L23.6 21.6 Z" fill="#dbdbdb"/></svg>
<svg style="position:absolute;left:27px;top:234px" width="27" height="24" viewBox="0 0 27 24"><polygon points="17.16,11.40 17.16,13.00 14.93,14.00 14.47,15.12 15.34,17.40 14.20,18.54 11.92,17.67 10.80,18.13 9.80,20.36 8.20,20.36 7.20,18.13 6.08,17.67 3.80,18.54 2.66,17.40 3.53,15.12 3.07,14.00 0.84,13.00 0.84,11.40 3.07,10.40 3.53,9.28 2.66,7.00 3.80,5.86 6.08,6.73 7.20,6.27 8.20,4.04 9.80,4.04 10.80,6.27 11.92,6.73 14.20,5.86 15.34,7.00 14.47,9.28 14.93,10.40" fill="#222"/><circle cx="9" cy="12.2" r="3.2" fill="#ececec"/><polygon points="25.16,4.80 25.16,6.00 23.74,6.70 23.30,7.47 23.40,9.05 22.36,9.65 21.04,8.77 20.16,8.77 18.84,9.65 17.80,9.05 17.90,7.47 17.46,6.70 16.04,6.00 16.04,4.80 17.46,4.10 17.90,3.33 17.80,1.75 18.84,1.15 20.16,2.03 21.04,2.03 22.36,1.15 23.40,1.75 23.30,3.33 23.74,4.10" fill="#222"/><circle cx="20.6" cy="5.4" r="1.6" fill="#ececec"/><polygon points="25.16,17.80 25.16,19.00 23.74,19.70 23.30,20.47 23.40,22.05 22.36,22.65 21.04,21.77 20.16,21.77 18.84,22.65 17.80,22.05 17.90,20.47 17.46,19.70 16.04,19.00 16.04,17.80 17.46,17.10 17.90,16.33 17.80,14.75 18.84,14.15 20.16,15.03 21.04,15.03 22.36,14.15 23.40,14.75 23.30,16.33 23.74,17.10" fill="#222"/><circle cx="20.6" cy="18.4" r="1.6" fill="#ececec"/></svg>
<svg style="position:absolute;left:28px;top:307px" width="25" height="22" viewBox="0 0 25 22"><path d="M1 0 H24 A1 1 0 0 1 25 1 V17 A1.4 1.4 0 0 1 23.6 18.4 H1.4 A1.4 1.4 0 0 1 0 17 V1 A1 1 0 0 1 1 0 Z M2.2 2 V13 H22.8 V2 Z" fill="#3e3e3e" fill-rule="evenodd"/><path d="M8.6 18 H16.2 L16.6 20.6 H8.2 Z" fill="#3e3e3e"/></svg>
<svg style="position:absolute;left:28px;top:381px" width="25" height="22" viewBox="0 0 25 22"><rect x="1" y="17.6" width="3" height="3" fill="#3e3e3e"/><rect x="6" y="15.6" width="3" height="5" fill="#3e3e3e"/><rect x="10.8" y="12.4" width="3" height="8.2" fill="#3e3e3e"/><rect x="15.6" y="7.8" width="3" height="12.8" fill="#3e3e3e"/><rect x="20.6" y="1.2" width="3" height="19.4" fill="#3e3e3e"/></svg>
<svg style="position:absolute;left:28px;top:451px" width="25" height="25" viewBox="0 0 25 25"><path d="M3.2 1 H20.2 C21.6 1 22.6 2.6 23.2 4.6 H1 C1.4 2.6 2.2 1 3.2 1 Z" fill="#3e3e3e"/><rect x="1" y="6" width="22.2" height="4.6" rx="0.8" fill="#3e3e3e"/><rect x="1" y="12.2" width="22.2" height="4.6" rx="0.8" fill="#3e3e3e"/><rect x="1" y="18.6" width="22.2" height="4.6" rx="0.8" fill="#3e3e3e"/><rect x="17" y="7.6" width="4.4" height="1.3" fill="#dbdbdb"/><rect x="9.2" y="13.8" width="12.2" height="1.3" fill="#dbdbdb"/><rect x="14" y="20.2" width="7.4" height="1.3" fill="#dbdbdb"/></svg>
<div style="position:absolute;left:1px;top:210px;width:229px;height:70px;border:5px solid #ff0000;box-sizing:content-box;width:224px;height:65px"></div>
<div style="position:absolute;left:0px;top:0px;width:1354px;height:66px;background:#00aaff"></div>
<svg style="position:absolute;left:0px;top:0px" width="1354" height="66" viewBox="0 0 1354 66"><g stroke="#80d8ff" stroke-opacity="0.16" stroke-width="1.4" fill="none"><path d="M517.8 66 L633.6 0 M541.5 66 L638.4 0 M657.3 66 L662 0 M679.7 0 L754.2 66 M645.4 66 L917.4 0 M915.2 66 L1039.3 0 M1156.3 0 L1174.1 66 M1246.3 0 L1354 56.3"/></g></svg>
<svg style="position:absolute;left:26px;top:24px" width="27" height="18" viewBox="0 0 27 18"><rect x="1" y="1" width="25" height="2.1" fill="#fff"/><rect x="1" y="8" width="25" height="2.1" fill="#fff"/><rect x="1" y="15" width="25" height="2.1" fill="#fff"/></svg>
<svg style="position:absolute;left:78px;top:11px" width="40" height="44" viewBox="0 0 40 44"><path d="M19.5 3.3 L35.9 12.3 L35.9 30.8 L19.5 39.7 L3.1 30.8 L3.1 12.3 Z" fill="none" stroke="#fff" stroke-width="2.2" stroke-linejoin="round"/><rect x="10.2" y="14.9" width="19" height="9.6" fill="none" stroke="#fff" stroke-width="1.8"/><path d="M19.7 14.9 V24.5" stroke="#fff" stroke-width="1.7"/><rect x="9.3" y="27" width="20.8" height="2" fill="#fff"/></svg>
<svg style="position:absolute;left:126px;top:23.5px" width="160" height="19" viewBox="0 0 160 19"><g fill="none" stroke="#fff" stroke-width="2.2" stroke-linejoin="miter"><path d="M0 1.6 H17.2 M8.6 1.6 V17.3"/><path d="M34.8 1.6 H20.2 V16.2 H34.8 M20.2 8.9 H33"/><path d="M37.8 17.3 V1.6 H50.2 Q52.3 1.6 52.3 3.7 V6.8 Q52.3 8.9 50.2 8.9 H37.8 M46.2 8.9 L53.8 17.0"/><path d="M58.1 17.3 V0.5 M57.2 1.2000000000000002 L66.4 11.3 L75.6 1.2000000000000002 M74.7 0.5 V17.3"/><path d="M80 0.5 V17.3"/><path d="M85.3 1.6 H96.9 Q99.6 1.6 99.6 4.3 V13.5 Q99.6 16.2 96.9 16.2 H85.3 Z"/><path d="M119.4 1.6 H105 V16.2 H119.4 M105 8.9 H117"/><path d="M137.4 3.6 Q137.4 1.6 135.4 1.6 H125.3 Q123.2 1.6 123.2 3.7 V6.8 Q123.2 8.9 125.3 8.9 H135.3 Q137.4 8.9 137.4 11 V14.1 Q137.4 16.2 135.3 16.2 H125.2 Q123.2 16.2 123.2 14.2"/><path d="M142.9 0.5 V17.3 M142.9 8.9 H148.9 L157.8 0.5 M148.9 8.9 L157.8 17.3"/></g></svg>
<svg style="position:absolute;left:1000px;top:23px" width="21" height="21" viewBox="0 0 21 21"><circle cx="10.2" cy="10" r="8.1" fill="none" stroke="#fff" stroke-width="2.1"/><path d="M7.4 8.4 C7.4 6.3 8.7 5.3 10.4 5.3 C12.1 5.3 13.4 6.4 13.4 8 C13.4 10 11.2 10.1 11.2 12.2" fill="none" stroke="#fff" stroke-width="2.8"/><rect x="9.7" y="13.3" width="3" height="2.4" fill="#fff"/></svg>
<svg style="position:absolute;left:1046px;top:24px" width="19" height="19" viewBox="0 0 19 19"><defs><clipPath id="uc"><circle cx="9.4" cy="9.5" r="7.6"/></clipPath></defs><circle cx="9.4" cy="9.5" r="8.3" fill="none" stroke="#fff" stroke-width="1.5"/><g clip-path="url(#uc)"><circle cx="9.4" cy="7" r="3.2" fill="#fff"/><path d="M2 19 C2 13.4 5 11 9.4 11 C13.8 11 16.8 13.4 16.8 19 Z" fill="#fff"/></g></svg>
<div class="t" style="left:1068.3px;top:28.23px;font-size:14.85px;line-height:14.85px;color:#fff;font-weight:400;letter-spacing:0.065px">Системный пользователь (admin123)</div>
<svg style="position:absolute;left:1329px;top:32.5px" width="9" height="6" viewBox="0 0 9 6"><path d="M1 1 L4.5 4.4 L8 1" fill="none" stroke="#fff" stroke-width="1.4"/></svg>
</body></html>
